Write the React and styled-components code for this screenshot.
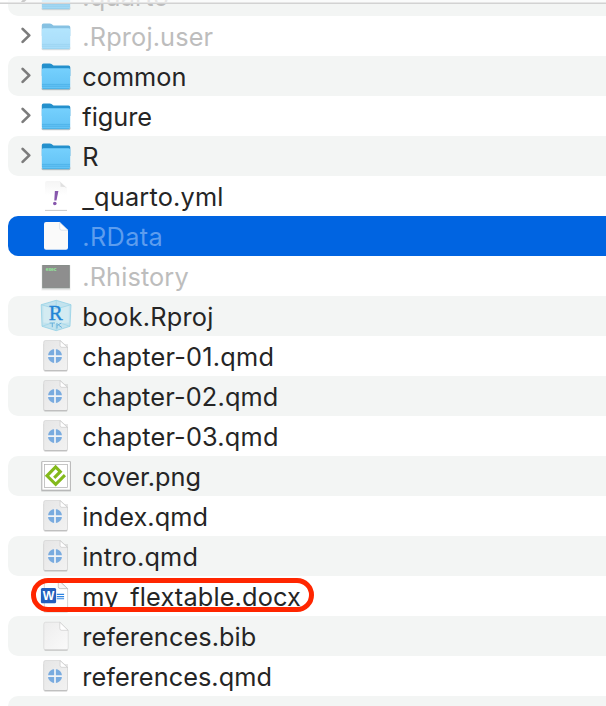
import React from "react";
import styled, { createGlobalStyle } from "styled-components";

const GlobalStyle = createGlobalStyle`
  html, body { margin: 0; background: #fff; overflow: hidden; }
  * { box-sizing: border-box; }
`;

const Window = styled.main`
  position: relative;
  width: 606px;
  height: 706px;
  overflow: hidden;
  background: #fff;
  font-family: Inter, "Liberation Sans", sans-serif;
  font-size: 25.3px;
`;

const HeaderEdge = styled.div`
  position: absolute;
  inset: 0 0 auto 0;
  height: 4px;
  background: rgba(255, 255, 255, 0.6);
  border-bottom: 1px solid #d2d2d2;
  box-shadow: inset 0 -1px #e6e6e6;
`;

const List = styled.ul`
  list-style: none;
  margin: -24px 0 0;
  padding: 0 0 0 8px;
`;

const Row = styled.li`
  display: flex;
  align-items: center;
  height: 40px;
  border-radius: 10px 0 0 10px;
  background: ${(p) => (p.$selected ? "#0064e1" : p.$striped ? "#f3f5f4" : "#fff")};
`;

const ChevronSlot = styled.span`
  display: flex;
  width: 32px;
  height: 40px;
  flex: none;
`;

const IconSlot = styled.span`
  display: flex;
  width: 32px;
  height: 40px;
  flex: none;
  opacity: ${(p) => (p.$dim ? 0.55 : 1)};
`;

const Name = styled.span`
  margin-left: 10.3px;
  line-height: 40px;
  height: 40px;
  padding-top: 1px;
  white-space: pre;
  letter-spacing: ${(p) => p.$tracking || 0}px;
  color: ${(p) => (p.$selected ? "#5d9dee" : p.$dim ? "#bdbdbd" : "#252525")};
`;

const Underscore = styled.span`
  display: inline-block;
  transform: translateY(1.5px);
`;

const Highlight = styled.div`
  position: absolute;
  left: 31px;
  top: 578px;
  width: 283px;
  height: 34px;
  border: 5px solid #ff2600;
  border-radius: 17px;
`;

const Chevron = () => (
  <svg width="32" height="40" viewBox="0 0 32 40">
    <path d="M14.6 12.9 21.3 19.4 14.6 25.9" fill="none" stroke="#7c7c7c" strokeWidth="2.7" strokeLinecap="round" strokeLinejoin="round" />
  </svg>
);

const Canvas = ({ children }) => (
  <svg width="32" height="40" viewBox="0 0 32 40">{children}</svg>
);

const Folder = () => (
  <Canvas>
    <path d="M2.2 31h27.6q1 0 .8 1.4-.2 1.9-2 1.9H3.4q-1.8 0-2-1.9z" fill="#777" opacity=".4" />
    <path d="M1.8 9.2q0-1.8 1.8-1.8h6.2q1 0 1.7.6l1.3 1.1q.6.5 1.5.5h14.2q1.8 0 1.8 1.8V20H1.8z" fill="#2490cc" />
    <path d="M1.8 13.8q0-1.5 1.5-1.5h25.4q1.5 0 1.5 1.5v17.3q0 1.9-1.9 1.9H3.7q-1.9 0-1.9-1.9z" fill="url(#folderFace)" />
    <path d="M2 28.4h28M2 30.2h28" stroke="#46ace4" strokeWidth=".7" />
    <path d="M2.4 32.8h27.2" stroke="#3ba5da" strokeWidth=".7" />
  </Canvas>
);

const Quarto = () => (
  <Canvas>
    <path d="M3.2 8h24.8v25.5q0 2-2 2H5.2q-2 0-2-2z" fill="#888" opacity=".2" />
    <path d="M3.7 6.2q0-1.7 1.7-1.7h14.8l7.3 6.6v21.7q0 1.7-1.7 1.7H5.4q-1.7 0-1.7-1.7z" fill="url(#pageFace)" stroke="#c9c9c9" strokeWidth=".5" />
    <path d="M4.5 34.8h22.6" stroke="#a6a6a6" strokeWidth=".7" />
    <path d="M20.1 4.7v5q0 1.6 1.7 1.6h5.6z" fill="#fff" stroke="#c1c1c1" strokeWidth=".6" />
    <circle cx="15" cy="20.1" r="7.1" fill="#79abdf" />
    <path d="M15 12.5v15.2M7.4 20.1h15.2" stroke="#f2f4f6" strokeWidth="1.7" />
  </Canvas>
);

const Blank = () => (
  <Canvas>
    <path d="M3.8 8.2q0-2 2-2h14.2l8.2 8v17.8q0 2-2 2H5.8q-2 0-2-2z" fill="url(#blankFace)" stroke="#d2d2d2" strokeWidth=".6" />
    <path d="M4.6 34.1h23" stroke="#b2b2b2" strokeWidth=".8" />
    <path d="M19.8 6.3v6.2q0 1.8 1.8 1.8h6.5z" fill="#fff" stroke="#c5c5c5" strokeWidth=".6" />
  </Canvas>
);

const SelectedPage = () => (
  <Canvas>
    <path d="M4 8q0-2 2-2h13.7l8.3 8.2v17.6q0 2-2 2H6q-2 0-2-2z" fill="#fafafa" />
    <path d="M19.7 6.4v5.8q0 2 2 2H28z" fill="#fff" stroke="#c9d4e2" strokeWidth=".6" />
  </Canvas>
);

const Yaml = () => (
  <Canvas>
    <path d="M5 7q0-2 2-2h12.7l7.3 6.3v23H5z" fill="url(#yamlFace)" />
    <path d="M19.6 5.4q1.2 1.1.9 5.4 4-.2 6.3 1.2z" fill="#e0e0e0" />
    <path d="M5 34.4h22" stroke="#c2c2c2" strokeWidth=".9" />
    <path d="M14.9 15.1h3.5l-1.9 9.5h-2.2z" fill="#8757ad" />
    <circle cx="14.8" cy="27.5" r="1.8" fill="#8757ad" />
  </Canvas>
);

const Terminal = () => (
  <Canvas>
    <rect x="1.5" y="9" width="29" height="25.4" fill="#999" opacity=".18" />
    <rect x="2.7" y="9.4" width="26.6" height="22.4" fill="#8e8e8e" stroke="#7e8580" strokeWidth=".8" />
    <path d="M2.3 32.7h27.4" stroke="#c8ccca" strokeWidth="1" />
    <text x="5.7" y="15.4" fill="#93ee9b" fontFamily="Liberation Mono" fontWeight="700" fontSize="4.8" textLength="11">exec</text>
  </Canvas>
);

const RProject = () => (
  <Canvas>
    <path d="M16.2 4.3 31 8.7 30 30.3 16.2 34.7 2 30.3 1.2 8.7z" fill="#c3e3ee" stroke="#89cde4" strokeWidth=".7" />
    <path d="M1.2 8.7 16.2 13 31 8.7M2 30.3 16.2 25.5 30 30.3M16.2 4.3V13M16.2 26v8.7" fill="none" stroke="#9bd6e8" strokeWidth=".7" />
    <path d="M3.4 10 16.2 13.6 28.8 10v16.6L16.2 28 3.4 26.6z" fill="#dceff5" opacity=".65" />
    <text x="8.7" y="24" fill="#2385d6" stroke="#2385d6" strokeWidth=".35" fontFamily="Liberation Serif" fontSize="21.5" textLength="14" lengthAdjust="spacingAndGlyphs">R</text>
    <path d="M9.6 27h5.4M12.3 27v4.2M17 27v5.5M17.3 29.4l4-2.4M18.4 29l3.4 2.5" stroke="#5dabd9" strokeWidth=".9" />
  </Canvas>
);

const Cover = () => (
  <Canvas>
    <rect x="1.3" y="5.6" width="29.6" height="29.8" fill="#888" opacity=".5" />
    <rect x="2" y="5.7" width="28.2" height="28.3" fill="#fff" stroke="#aaa" strokeWidth=".6" />
    <rect x="4.6" y="8.6" width="23" height="23" fill="#fff" stroke="#adadad" strokeWidth=".7" />
    <path d="M14.2 21.8 20.3 15.7 15.6 11 7 19.8 15.7 28.4 24.9 19.2" fill="none" stroke="#83b91b" strokeWidth="3.1" />
  </Canvas>
);

const Word = () => (
  <Canvas>
    <path d="M4.3 4.2h14.8l8.5 8.4V36H4.3z" fill="#fff" stroke="#c9c9c9" strokeWidth=".8" />
    <path d="M18.3 4.2v6.6q0 1.8 1.8 1.8h7.5z" fill="#f6f6f6" stroke="#bcbcbc" strokeWidth=".8" />
    <path d="M16.8 18.4h7.3M16.8 20.6h7.3M16.8 22.8h7.3" stroke="#2d82e1" strokeWidth="1.1" />
    <rect x=".9" y="12" width="15.2" height="15.2" rx="1.5" fill="#245fbd" />
    <text x="2.7" y="24" fill="#fff" fontFamily="Liberation Sans" fontWeight="700" fontSize="12" textLength="11.6" lengthAdjust="spacingAndGlyphs">W</text>
  </Canvas>
);

const icons = {
  folder: Folder,
  yaml: Yaml,
  selectedPage: SelectedPage,
  terminal: Terminal,
  rproject: RProject,
  quarto: Quarto,
  cover: Cover,
  word: Word,
  blank: Blank,
};

const files = [
  { name: ".quarto", icon: "folder", dim: true, expandable: true, tracking: 0.2 },
  { name: ".Rproj.user", icon: "folder", dim: true, expandable: true, tracking: 0.15 },
  { name: "common", icon: "folder", expandable: true },
  { name: "figure", icon: "folder", expandable: true },
  { name: "R", icon: "folder", expandable: true },
  { name: "_quarto.yml", icon: "yaml", tracking: 0.2 },
  { name: ".RData", icon: "selectedPage", selected: true, tracking: 0.35 },
  { name: ".Rhistory", icon: "terminal", dim: true, tracking: 0.12 },
  { name: "book.Rproj", icon: "rproject", tracking: 0.2 },
  { name: "chapter-01.qmd", icon: "quarto", tracking: 0.22 },
  { name: "chapter-02.qmd", icon: "quarto", tracking: 0.17 },
  { name: "chapter-03.qmd", icon: "quarto", tracking: 0.2 },
  { name: "cover.png", icon: "cover" },
  { name: "index.qmd", icon: "quarto", tracking: 0.1 },
  { name: "intro.qmd", icon: "quarto", tracking: 0.2 },
  { name: "my_flextable.docx", icon: "word", tracking: 0.15 },
  { name: "references.bib", icon: "blank", tracking: 0.08 },
  { name: "references.qmd", icon: "quarto", tracking: 0.05 },
  { name: "" },
];

const SharedPaints = () => (
  <defs>
    <linearGradient id="folderFace" x2="0" y2="1"><stop stopColor="#75d0fd" /><stop offset="1" stopColor="#62c2f5" /></linearGradient>
    <linearGradient id="pageFace" x2="1" y2="1"><stop stopColor="#e6e6e6" /><stop offset="1" stopColor="#f2f2f2" /></linearGradient>
    <linearGradient id="blankFace" x2="1" y2="1"><stop stopColor="#ededed" /><stop offset="1" stopColor="#fafafa" /></linearGradient>
    <linearGradient id="yamlFace" x2="0" y2="1"><stop stopColor="#f5f5f5" /><stop offset=".5" stopColor="#fff" /></linearGradient>
  </defs>
);

const PaintStore = styled.svg`
  position: absolute;
  width: 0;
  height: 0;
`;

export default function App() {
  return (
    <Window>
      <GlobalStyle />
      <PaintStore><SharedPaints /></PaintStore>
      <List>
        {files.map((f, i) => {
          const Icon = icons[f.icon];
          const [head, tail] = f.name.split("_");
          return (
            <Row key={i} $striped={i % 2 === 0} $selected={f.selected}>
              <ChevronSlot>{f.expandable && <Chevron />}</ChevronSlot>
              <IconSlot $dim={f.dim && f.icon === "folder"}>{Icon && <Icon />}</IconSlot>
              <Name $dim={f.dim} $selected={f.selected} $tracking={f.tracking}>
                {head}
                {tail && <Underscore>_</Underscore>}
                {tail}
              </Name>
            </Row>
          );
        })}
      </List>
      <HeaderEdge />
      <Highlight />
    </Window>
  );
}
